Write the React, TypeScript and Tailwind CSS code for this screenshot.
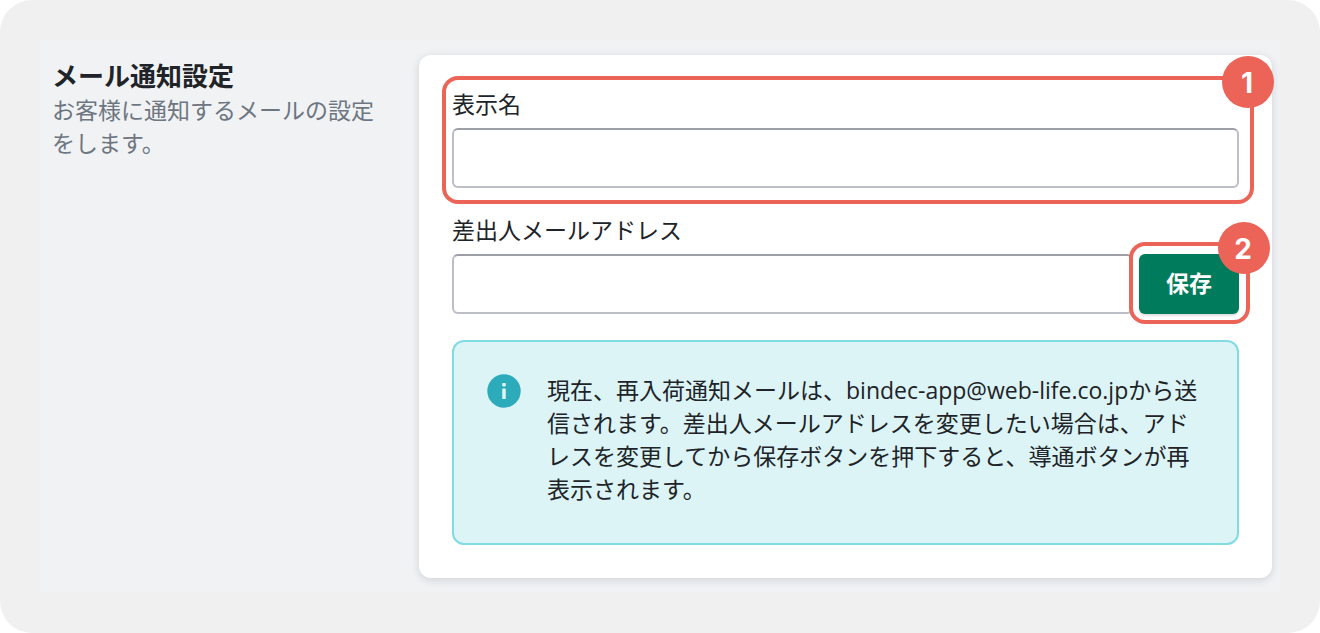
import type { ReactNode } from 'react'

function Highlight({ step, className }: { step: number; className: string }) {
  return (
    <div className={`pointer-events-none absolute rounded-2xl border-4 border-[#ec6358] ${className}`}>
      <span className="absolute -top-6 -right-6 flex h-13 w-13 items-center justify-center rounded-full bg-[#ec6358] pt-0.5 pr-0.5 font-['Inter',sans-serif] text-[28px] leading-none font-bold text-white">
        {step}
      </span>
    </div>
  )
}

function TextField({ id, type }: { id: string; type: string }) {
  return (
    <input
      id={id}
      name={id}
      type={type}
      className="h-15 w-full min-w-0 rounded-md border-2 border-[#bcbfc8] border-t-[#9c9fa5] bg-white px-4 outline-none"
    />
  )
}

function InfoBanner({ children }: { children: ReactNode }) {
  return (
    <div className="mt-[26px] flex items-start gap-[26px] rounded-xl border-2 border-[#81dbe2] bg-[#dcf4f6] px-[33px] pt-8 pb-[37px]">
      <svg className="h-[34px] w-[34px] shrink-0" viewBox="0 0 34 34" aria-hidden="true">
        <circle cx="17" cy="17" r="16.7" fill="#2cacba" />
        <rect x="15.2" y="9" width="3.6" height="3.4" rx="0.8" fill="#dcf4f6" />
        <rect x="15.2" y="14.4" width="3.6" height="10.6" rx="0.8" fill="#dcf4f6" />
      </svg>
      <p>{children}</p>
    </div>
  )
}

function App() {
  return (
    <div className="bg-white font-['Open_Sans','Noto_Sans_CJK_JP',sans-serif]" lang="ja">
      <main className="rounded-[32px] bg-[#f0f0f0] px-10 pt-10 pb-[41px]">
        <section className="flex items-start bg-[#f0f2f4] pt-[15px] pr-2 pb-[14px] pl-3 text-[23px] leading-[33px] text-[#202327]">
          <div className="w-[367px] shrink-0 pt-1 pr-8">
            <h1 className="text-[26px] leading-[35px] font-bold">メール通知設定</h1>
            <p className="text-[#6d7681]">お客様に通知するメールの設定をします。</p>
          </div>

          <form
            className="min-w-0 flex-1 rounded-xl bg-white p-[33px] shadow-[0_2px_8px_rgba(30,35,45,0.15)]"
            onSubmit={(e) => e.preventDefault()}
          >
            <div className="relative">
              <label htmlFor="displayName" className="mb-[7px] block">
                表示名
              </label>
              <div className="flex">
                <TextField id="displayName" type="text" />
              </div>
              <Highlight step={1} className="-top-3 -right-[15px] -bottom-4 -left-[10px]" />
            </div>

            <div className="mt-[26px]">
              <label htmlFor="senderEmail" className="mb-[7px] block">
                差出人メールアドレス
              </label>
              <div className="flex gap-1.5">
                <TextField id="senderEmail" type="email" />
                <div className="relative shrink-0">
                  <button
                    type="submit"
                    className="h-15 w-[100px] rounded-md bg-[#007b5c] pb-0.5 font-bold text-white shadow-[0_2px_2px_rgba(0,0,0,0.12)]"
                  >
                    保存
                  </button>
                  <Highlight step={2} className="-top-3 -right-[11px] -bottom-[10px] -left-[10px]" />
                </div>
              </div>
            </div>

            <InfoBanner>
              現在、再入荷通知メールは、bindec-app@web-life.co.jpから送信されます。差出人メールアドレスを変更したい場合は、アドレスを変更してから保存ボタンを押下すると、導通ボタンが再表示されます。
            </InfoBanner>
          </form>
        </section>
      </main>
    </div>
  )
}

export default App
